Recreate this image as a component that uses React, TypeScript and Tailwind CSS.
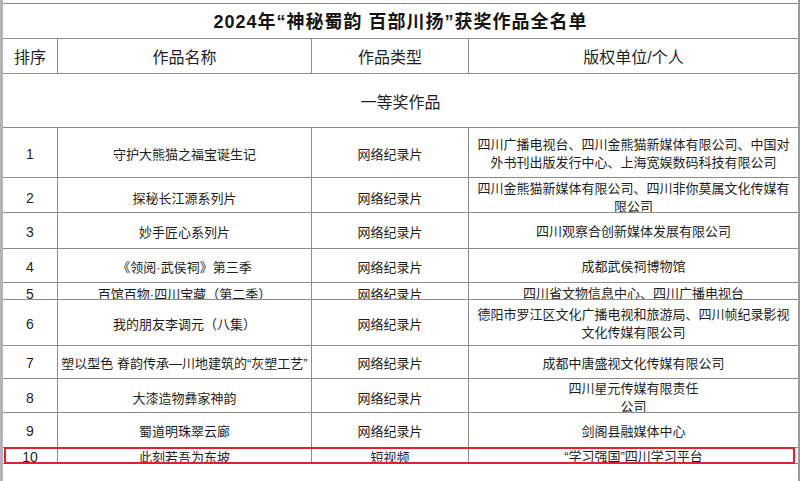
import React from "react";

type Row = {
  n: string;
  name: string;
  type: string;
  org: string[];
  h: string;
  pad: string;
  red?: boolean;
};

const rows: Row[] = [
  { n: "1", name: "守护大熊猫之福宝诞生记", type: "网络纪录片", org: ["四川广播电视台、四川金熊猫新媒体有限公司、中国对", "外书刊出版发行中心、上海宽娱数码科技有限公司"], h: "h-[50px]", pad: "pt-[3px]" },
  { n: "2", name: "探秘长江源系列片", type: "网络纪录片", org: ["四川金熊猫新媒体有限公司、四川非你莫属文化传媒有", "限公司"], h: "h-[35px]", pad: "pt-[6px]" },
  { n: "3", name: "妙手匠心系列片", type: "网络纪录片", org: ["四川观察合创新媒体发展有限公司"], h: "h-[36px]", pad: "pt-[3px]" },
  { n: "4", name: "《领阅·武侯祠》第三季", type: "网络纪录片", org: ["成都武侯祠博物馆"], h: "h-[34px]", pad: "pt-[3px]" },
  { n: "5", name: "百馆百物·四川宝藏（第二季）", type: "网络纪录片", org: ["四川省文物信息中心、四川广播电视台"], h: "h-[17px]", pad: "pt-[6px]" },
  { n: "6", name: "我的朋友李调元（八集）", type: "网络纪录片", org: ["德阳市罗江区文化广播电视和旅游局、四川帧纪录影视", "文化传媒有限公司"], h: "h-[46px]", pad: "pt-[3px]" },
  { n: "7", name: "塑以型色 脊韵传承—川地建筑的“灰塑工艺”", type: "网络纪录片", org: ["成都中唐盛视文化传媒有限公司"], h: "h-[33px]", pad: "pt-[3px]" },
  { n: "8", name: "大漆造物彝家神韵", type: "网络纪录片", org: ["四川星元传媒有限责任", "公司"], h: "h-[34px]", pad: "pt-[5px]" },
  { n: "9", name: "蜀道明珠翠云廊", type: "网络纪录片", org: ["剑阁县融媒体中心"], h: "h-[35px]", pad: "pt-[3px]" },
  { n: "10", name: "此刻若吾为东坡", type: "短视频", org: ["“学习强国”四川学习平台"], h: "h-[16px]", pad: "pt-[3px]", red: true },
];

const cell = "flex items-center justify-center text-center overflow-hidden whitespace-nowrap";

export default function App() {
  return (
    <div
      className="flex w-[800px] h-[481px] bg-white text-[#1e1e1e] overflow-hidden"
      style={{ fontFamily: '"Liberation Sans", "Noto Sans CJK SC", sans-serif' }}
    >
      <div className="w-[3px] h-full bg-[#b4b4b4] shrink-0" />
      <div className="w-[795px] pt-[3px] shrink-0">
        <div className="border-t border-[#8c8c8c]">
          <div className="h-[35px] border-b border-[#8c8c8c] flex items-center justify-center pt-[3px] text-[18px] font-semibold tracking-[1px] text-[#141414]">
            2024年“神秘蜀韵 百部川扬”获奖作品全名单
          </div>
          <div className="grid grid-cols-[55px_254px_157px_329px] h-[35px] border-b border-[#8c8c8c] text-[16px]">
            <div className={`${cell} border-r border-[#8c8c8c] pt-[3px]`}>排序</div>
            <div className={`${cell} border-r border-[#8c8c8c] pt-[3px]`}>作品名称</div>
            <div className={`${cell} border-r border-[#8c8c8c] pt-[3px]`}>作品类型</div>
            <div className={`${cell} pt-[3px]`}>版权单位/个人</div>
          </div>
          <div className="h-[54px] border-b border-[#8c8c8c] flex items-center justify-center pt-[5px] text-[16px]">
            一等奖作品
          </div>
          {rows.map((r) => (
            <div
              key={r.n}
              className={`relative grid grid-cols-[55px_254px_157px_329px] ${r.h} border-b border-[#8c8c8c] text-[13px] leading-[19px]`}
            >
              <div className={`${cell} ${r.pad} border-r border-[#8c8c8c] text-[14px]`}>{r.n}</div>
              <div className={`${cell} ${r.pad} border-r border-[#8c8c8c]`}>{r.name}</div>
              <div className={`${cell} ${r.pad} border-r border-[#8c8c8c]`}>{r.type}</div>
              <div className={`${cell} ${r.pad} flex-col leading-[18px]`}>
                {r.org.map((l, i) => (
                  <span key={i} className="block">{l}</span>
                ))}
              </div>
              {r.red && (
                <div className="absolute left-[1px] top-[-1px] w-[791px] h-[17px] border-2 border-[#e3202b] pointer-events-none" />
              )}
            </div>
          ))}
        </div>
      </div>
      <div className="w-[2px] h-full bg-[#9a9a9a] shrink-0" />
    </div>
  );
}
